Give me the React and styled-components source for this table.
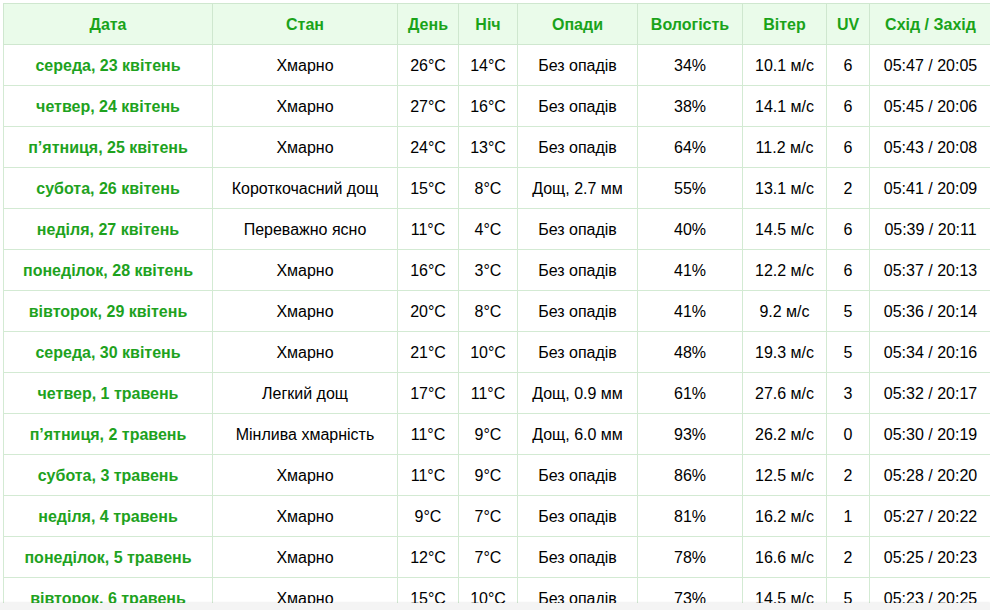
import React from "react";
import styled, { createGlobalStyle } from "styled-components";

const GlobalStyle = createGlobalStyle`
  html, body {
    margin: 0;
    padding: 0;
    background: #ffffff;
    font-family: "Liberation Sans", Arial, sans-serif;
  }
`;

const columns = [
  { title: "Дата", width: 209 },
  { title: "Стан", width: 185 },
  { title: "День", width: 61 },
  { title: "Ніч", width: 59 },
  { title: "Опади", width: 120 },
  { title: "Вологість", width: 105 },
  { title: "Вітер", width: 84 },
  { title: "UV", width: 43 },
  { title: "Схід / Захід", width: 122 },
];

const days = [
  ["середа, 23 квітень", "Хмарно", "26°C", "14°C", "Без опадів", "34%", "10.1 м/с", "6", "05:47 / 20:05"],
  ["четвер, 24 квітень", "Хмарно", "27°C", "16°C", "Без опадів", "38%", "14.1 м/с", "6", "05:45 / 20:06"],
  ["п’ятниця, 25 квітень", "Хмарно", "24°C", "13°C", "Без опадів", "64%", "11.2 м/с", "6", "05:43 / 20:08"],
  ["субота, 26 квітень", "Короткочасний дощ", "15°C", "8°C", "Дощ, 2.7 мм", "55%", "13.1 м/с", "2", "05:41 / 20:09"],
  ["неділя, 27 квітень", "Переважно ясно", "11°C", "4°C", "Без опадів", "40%", "14.5 м/с", "6", "05:39 / 20:11"],
  ["понеділок, 28 квітень", "Хмарно", "16°C", "3°C", "Без опадів", "41%", "12.2 м/с", "6", "05:37 / 20:13"],
  ["вівторок, 29 квітень", "Хмарно", "20°C", "8°C", "Без опадів", "41%", "9.2 м/с", "5", "05:36 / 20:14"],
  ["середа, 30 квітень", "Хмарно", "21°C", "10°C", "Без опадів", "48%", "19.3 м/с", "5", "05:34 / 20:16"],
  ["четвер, 1 травень", "Легкий дощ", "17°C", "11°C", "Дощ, 0.9 мм", "61%", "27.6 м/с", "3", "05:32 / 20:17"],
  ["п’ятниця, 2 травень", "Мінлива хмарність", "11°C", "9°C", "Дощ, 6.0 мм", "93%", "26.2 м/с", "0", "05:30 / 20:19"],
  ["субота, 3 травень", "Хмарно", "11°C", "9°C", "Без опадів", "86%", "12.5 м/с", "2", "05:28 / 20:20"],
  ["неділя, 4 травень", "Хмарно", "9°C", "7°C", "Без опадів", "81%", "16.2 м/с", "1", "05:27 / 20:22"],
  ["понеділок, 5 травень", "Хмарно", "12°C", "7°C", "Без опадів", "78%", "16.6 м/с", "2", "05:25 / 20:23"],
  ["вівторок, 6 травень", "Хмарно", "15°C", "10°C", "Без опадів", "73%", "14.5 м/с", "5", "05:23 / 20:25"],
];

const App = () => {
  return (
    <>
      <GlobalStyle />
      <Page>
        <ForecastTable>
          <colgroup>
            {columns.map((col) => (
              <col key={col.title} style={{ width: col.width }} />
            ))}
          </colgroup>
          <thead>
            <tr>
              {columns.map((col) => (
                <HeadCell key={col.title}>{col.title}</HeadCell>
              ))}
            </tr>
          </thead>
          <tbody>
            {days.map((row) => (
              <tr key={row[0]}>
                {row.map((value, i) => (
                  <Cell key={i} $date={i === 0}>
                    {value}
                  </Cell>
                ))}
              </tr>
            ))}
          </tbody>
        </ForecastTable>
      </Page>
      <BottomBar />
    </>
  );
};

const Page = styled.div`
  padding: 3px 0 0 3px;
  width: 987px;
  height: 607px;
  overflow: hidden;
`;

const ForecastTable = styled.table`
  border-collapse: collapse;
  table-layout: fixed;
  width: 988px;
  font-size: 16px;
  line-height: 18px;
  color: #000;
`;

const HeadCell = styled.th`
  height: 39px;
  padding: 1px 4px 0;
  background-color: #eafbea;
  border: 1px solid #cfe7cf;
  color: #1aa31a;
  font-weight: 700;
  text-align: center;
  white-space: nowrap;
`;

const Cell = styled.td`
  height: 39px;
  padding: 1px 4px 0;
  border: 1px solid #d3ead3;
  text-align: center;
  white-space: nowrap;
  color: ${(props) => (props.$date ? "#1ea21e" : "#000000")};
  font-weight: ${(props) => (props.$date ? 700 : 400)};
`;

const BottomBar = styled.div`
  position: fixed;
  left: 0;
  right: 0;
  bottom: 0;
  height: 7px;
  background-color: #f4f4f4;
  box-shadow: 0 -1px 2px rgba(0, 0, 0, 0.06);
`;

export default App;
